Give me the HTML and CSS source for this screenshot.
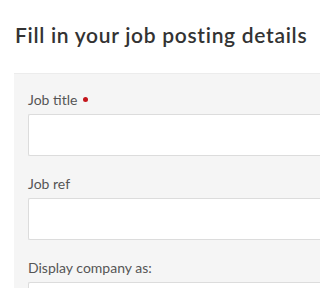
FILE: index.html
```html
<!DOCTYPE html>
<html>
<head>
<meta charset="utf-8">
<link rel="stylesheet" href="styles.css">
</head>
<body>
<div class="page">
  <h1 class="title">Fill in your job posting details</h1>
  <div class="panel">
    <div class="field">
      <label class="label">Job title <span class="req"></span></label>
      <div class="input"></div>
    </div>
    <div class="field">
      <label class="label">Job ref</label>
      <div class="input"></div>
    </div>
    <div class="field">
      <label class="label">Display company as:</label>
      <div class="input"></div>
    </div>
  </div>
</div>
</body>
</html>
```
FILE: styles.css
```css
html, body {
  margin: 0;
  padding: 0;
  background: #fff;
}
.page {
  box-sizing: border-box;
  font-family: Lato, "Liberation Sans", sans-serif;
  padding-top: 22px;
  height: 288px;
  overflow: hidden;
}
.title {
  margin: 0 0 0 15px;
  font-size: 21px;
  line-height: 26px;
  font-weight: 600;
  letter-spacing: 0.7px;
  color: #333;
  white-space: nowrap;
}
.panel {
  margin: 25px 0 0 14px;
  background: #f5f5f5;
  border-top: 1px solid #ececec;
  padding: 16px 0 0 14px;
  display: flex;
  flex-direction: column;
  gap: 18px;
}
.field {
  display: flex;
  flex-direction: column;
  gap: 4px;
}
.label {
  font-size: 14px;
  line-height: 20px;
  color: #555;
  display: flex;
  align-items: center;
  gap: 6px;
}
.req {
  width: 5px;
  height: 5px;
  border-radius: 50%;
  background: #c4161c;
  margin-top: -1px;
}
.input {
  height: 40px;
  background: #fff;
  border: 1px solid #dcdcdc;
  border-right: 0;
  border-radius: 2px 0 0 2px;
}
```
